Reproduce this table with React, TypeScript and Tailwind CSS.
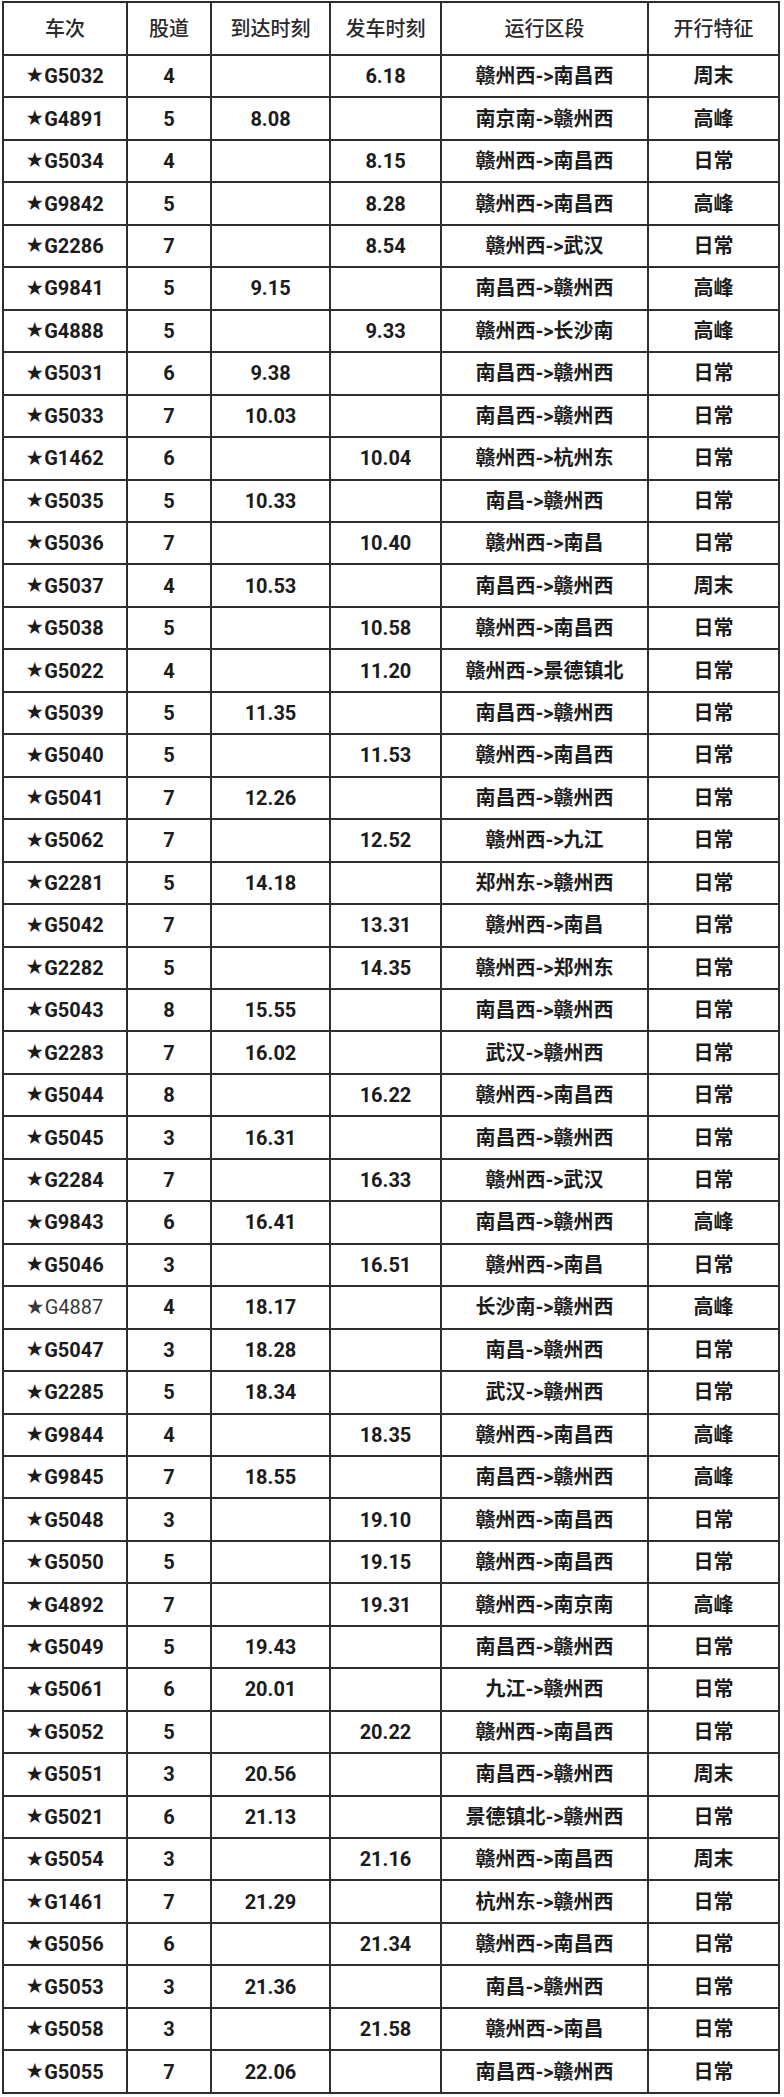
const rows = [
  'G5032|4||6.18|赣州西->南昌西|周末',
  'G4891|5|8.08||南京南->赣州西|高峰',
  'G5034|4||8.15|赣州西->南昌西|日常',
  'G9842|5||8.28|赣州西->南昌西|高峰',
  'G2286|7||8.54|赣州西->武汉|日常',
  'G9841|5|9.15||南昌西->赣州西|高峰',
  'G4888|5||9.33|赣州西->长沙南|高峰',
  'G5031|6|9.38||南昌西->赣州西|日常',
  'G5033|7|10.03||南昌西->赣州西|日常',
  'G1462|6||10.04|赣州西->杭州东|日常',
  'G5035|5|10.33||南昌->赣州西|日常',
  'G5036|7||10.40|赣州西->南昌|日常',
  'G5037|4|10.53||南昌西->赣州西|周末',
  'G5038|5||10.58|赣州西->南昌西|日常',
  'G5022|4||11.20|赣州西->景德镇北|日常',
  'G5039|5|11.35||南昌西->赣州西|日常',
  'G5040|5||11.53|赣州西->南昌西|日常',
  'G5041|7|12.26||南昌西->赣州西|日常',
  'G5062|7||12.52|赣州西->九江|日常',
  'G2281|5|14.18||郑州东->赣州西|日常',
  'G5042|7||13.31|赣州西->南昌|日常',
  'G2282|5||14.35|赣州西->郑州东|日常',
  'G5043|8|15.55||南昌西->赣州西|日常',
  'G2283|7|16.02||武汉->赣州西|日常',
  'G5044|8||16.22|赣州西->南昌西|日常',
  'G5045|3|16.31||南昌西->赣州西|日常',
  'G2284|7||16.33|赣州西->武汉|日常',
  'G9843|6|16.41||南昌西->赣州西|高峰',
  'G5046|3||16.51|赣州西->南昌|日常',
  'G4887|4|18.17||长沙南->赣州西|高峰',
  'G5047|3|18.28||南昌->赣州西|日常',
  'G2285|5|18.34||武汉->赣州西|日常',
  'G9844|4||18.35|赣州西->南昌西|高峰',
  'G9845|7|18.55||南昌西->赣州西|高峰',
  'G5048|3||19.10|赣州西->南昌西|日常',
  'G5050|5||19.15|赣州西->南昌西|日常',
  'G4892|7||19.31|赣州西->南京南|高峰',
  'G5049|5|19.43||南昌西->赣州西|日常',
  'G5061|6|20.01||九江->赣州西|日常',
  'G5052|5||20.22|赣州西->南昌西|日常',
  'G5051|3|20.56||南昌西->赣州西|周末',
  'G5021|6|21.13||景德镇北->赣州西|日常',
  'G5054|3||21.16|赣州西->南昌西|周末',
  'G1461|7|21.29||杭州东->赣州西|日常',
  'G5056|6||21.34|赣州西->南昌西|日常',
  'G5053|3|21.36||南昌->赣州西|日常',
  'G5058|3||21.58|赣州西->南昌|日常',
  'G5055|7|22.06||南昌西->赣州西|日常',
].map((r) => r.split('|'));

const headers = ['车次', '股道', '到达时刻', '发车时刻', '运行区段', '开行特征'];

const cell =
  'flex items-center justify-center border-r-2 border-b-2 border-[#2e2e2e] whitespace-nowrap';

export default function App() {
  return (
    <div className="min-h-screen bg-white pl-[2px] pt-[1px] font-['Roboto','Noto_Sans_CJK_SC',sans-serif] text-[20px] text-[#1c1c1c]">
      <div className="grid w-[778px] grid-cols-[124px_84px_119px_111px_207px_131px] grid-rows-[53px] auto-rows-[42.46px] border-l-2 border-t-2 border-[#2e2e2e]">
        {headers.map((h) => (
          <div key={h} className={`${cell} font-medium text-[#2a2a2a]`}>
            {h}
          </div>
        ))}
        {rows.map(([train, track, arr, dep, route, kind]) => (
          <div key={train} className="contents">
            <div
              className={`${cell} ${
                train === 'G4887' ? 'font-normal text-[#3a3a3a]' : 'font-bold'
              }`}
            >
              <span className="text-[17px] mr-[1px]">★</span>
              {train}
            </div>
            <div className={`${cell} font-bold`}>{track}</div>
            <div className={`${cell} font-bold`}>{arr}</div>
            <div className={`${cell} font-bold`}>{dep}</div>
            <div className={`${cell} font-bold`}>{route}</div>
            <div className={`${cell} font-bold`}>{kind}</div>
          </div>
        ))}
      </div>
    </div>
  );
}
